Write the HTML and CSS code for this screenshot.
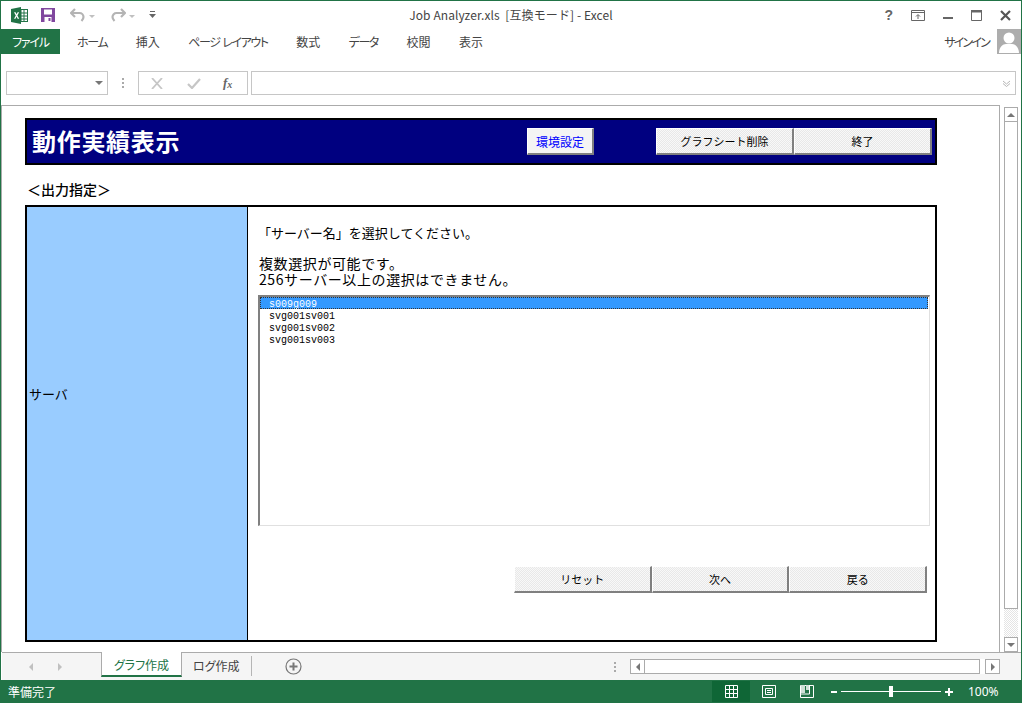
FILE: index.html
```html
<!DOCTYPE html>
<html lang="ja">
<head>
    <meta charset="UTF-8">
    <title>Job Analyzer.xls [互換モード] - Excel</title>
    <link rel="stylesheet" href="styles.css">
</head>
<body>
    <div class="window">
        <!-- タイトルバー -->
        <div class="titlebar">
            <div class="quick">
                <svg class="ico-excel" width="17" height="17" viewBox="0 0 17 17">
                    <rect x="7" y="2.5" width="9.5" height="12" fill="#fff" stroke="#217346"/>
                    <path d="M10 3v11M13 3v11M7 6h9M7 9h9M7 12h9" stroke="#217346" fill="none"/>
                    <path d="M0 2l10-2v17l-10-2z" fill="#217346"/>
                    <path d="M3 5.2h1.6l1 2 1-2h1.5l-1.700 3.200 1.800 3.400h-1.600l-1-2.200-1.100 2.200h-1.500l1.800-3.400z" fill="#fff"/>
                </svg>
                <svg class="ico-save" width="14" height="14" viewBox="0 0 14 14">
                    <path d="M0 0h14v14h-14z" fill="#80479e"/>
                    <rect x="3" y="1.500" width="8" height="5" fill="#fff"/>
                    <rect x="3.500" y="9" width="7" height="5" fill="#fff"/>
                    <rect x="7.500" y="10" width="2" height="3" fill="#80479e"/>
                </svg>
                <svg class="ico-undo" width="16" height="14" viewBox="0 0 16 14">
                    <path d="M5 1l-4 4 4 4M1.500 5h8a4 4 0 0 1 4 4c0 1.500-1 3-2 4" fill="none" stroke="#b4b4b4" stroke-width="2.200"/>
                </svg>
                <span class="mini-arrow"></span>
                <svg class="ico-redo" width="16" height="14" viewBox="0 0 16 14">
                    <path d="M11 1l4 4-4 4M14.500 5h-8a4 4 0 0 0-4 4c0 1.500 1 3 2 4" fill="none" stroke="#b4b4b4" stroke-width="2.200"/>
                </svg>
                <span class="mini-arrow"></span>
                <svg class="ico-custom" width="7" height="8" viewBox="0 0 7 8">
                    <path d="M1 0h5v1h-5zM0 3h7l-3.500 4z" fill="#666"/>
                </svg>
            </div>
            <div class="title">Job Analyzer.xls&nbsp; [互換モード] - Excel</div>
            <div class="winctrl">
                <span class="help">?</span>
                <svg width="14" height="11" viewBox="0 0 14 11">
                    <path d="M.5.500h13v10h-13z" fill="none" stroke="#666"/>
                    <path d="M1 2.500h12" stroke="#666"/>
                    <path d="M7 9v-4M5 6.500l2-2 2 2" fill="none" stroke="#666"/>
                </svg>
                <svg width="10" height="11" viewBox="0 0 10 11"><path d="M0 7h10v2h-10z" fill="#666"/></svg>
                <svg width="11" height="11" viewBox="0 0 11 11">
                    <path d="M.5.500h10v10h-10z" fill="none" stroke="#666"/><path d="M0 0h11v2.500h-11z" fill="#666"/>
                </svg>
                <svg width="11" height="11" viewBox="0 0 11 11">
                    <path d="M1 1l9 9M10 1l-9 9" stroke="#555" stroke-width="2.200"/>
                </svg>
            </div>
        </div>

        <!-- リボンタブ -->
        <div class="ribbon">
            <div class="file-tab">ファイル</div>
            <ul class="tabs">
                <li class="kana">ホーム</li>
                <li>挿入</li>
                <li class="kana">ページ レイアウト</li>
                <li>数式</li>
                <li class="kana">データ</li>
                <li>校閲</li>
                <li>表示</li>
            </ul>
            <div class="signin">サインイン</div>
            <div class="avatar">
                <svg width="24" height="24" viewBox="0 0 24 24">
                    <circle cx="12" cy="9" r="5.500" fill="#fff"/>
                    <path d="M2 24c0-6 4-9 7-9h6c3 0 7 3 7 9z" fill="#fff"/>
                </svg>
            </div>
        </div>

        <!-- 数式バー -->
        <div class="formula">
            <div class="namebox"><span class="drop"></span></div>
            <div class="grip"><i></i><i></i><i></i></div>
            <div class="fx-btns">
                <svg width="12" height="11" viewBox="0 0 12 11"><path d="M1 0l10 11M11 0l-10 11" stroke="#c6c6c6" stroke-width="1.800"/></svg>
                <svg width="14" height="11" viewBox="0 0 14 11"><path d="M1 6l4 4 8-9" fill="none" stroke="#c6c6c6" stroke-width="2.200"/></svg>
                <span class="fx">f<sub>x</sub></span>
            </div>
            <div class="fx-input">
                <svg width="9" height="7" viewBox="0 0 9 7"><path d="M1 1l3.500 3 3.500-3M1 3.500l3.500 3 3.500-3" fill="none" stroke="#b5b5b5"/></svg>
            </div>
        </div>

        <!-- シート -->
        <div class="sheet-row">
            <div class="sheet">
                <div class="banner">
                    <h1>動作実績表示</h1>
                    <button class="btn btn-config">環境設定</button>
                    <div class="banner-right">
                        <button class="btn btn-wide">グラフシート削除</button>
                        <button class="btn btn-wide">終了</button>
                    </div>
                </div>
                <div class="section-label">＜出力指定＞</div>
                <div class="panel">
                    <div class="panel-side">サーバ</div>
                    <div class="panel-main">
                        <p class="lead">「サーバー名」を選択してください。</p>
                        <p class="note">複数選択が可能です。<br>256サーバー以上の選択はできません。</p>
                        <ul class="listbox">
                            <li class="selected">s009g009</li>
                            <li>svg001sv001</li>
                            <li>svg001sv002</li>
                            <li>svg001sv003</li>
                        </ul>
                        <div class="actions">
                            <button class="btn btn-wide">リセット</button>
                            <button class="btn btn-wide">次へ</button>
                            <button class="btn btn-wide">戻る</button>
                        </div>
                    </div>
                </div>
            </div>
            <div class="vscroll">
                <div class="sb-btn"><span class="tri tri-up"></span></div>
                <div class="sb-thumb"></div>
                <div class="sb-track"></div>
                <div class="sb-btn"><span class="tri tri-down"></span></div>
            </div>
        </div>

        <!-- シートタブ -->
        <div class="sheetbar">
            <div class="nav">
                <span class="tri tri-left light"></span>
                <span class="tri tri-right light"></span>
            </div>
            <div class="stab active">グラフ作成</div>
            <div class="stab">ログ作成</div>
            <svg class="add" width="17" height="17" viewBox="0 0 17 17">
                <circle cx="8.500" cy="8.500" r="7.500" fill="none" stroke="#777" stroke-width="1.200"/>
                <path d="M8.500 4.500v8M4.500 8.500h8" stroke="#777" stroke-width="2"/>
            </svg>
            <div class="grip grip-sheet"><i></i><i></i><i></i></div>
            <div class="hscroll">
                <div class="sb-btn sb-h"><span class="tri tri-left"></span></div>
                <div class="hs-thumb"></div>
                <div class="sb-btn sb-h"><span class="tri tri-right"></span></div>
            </div>
        </div>

        <!-- ステータスバー -->
        <div class="status">
            <div class="ready">準備完了</div>
            <div class="view active-view">
                <svg width="13" height="13" viewBox="0 0 13 13"><path d="M.5.500h12v12h-12zM4.500 0v13M8.500 0v13M0 4.500h13M0 8.500h13" fill="none" stroke="#fff"/></svg>
            </div>
            <div class="view">
                <svg width="14" height="13" viewBox="0 0 14 13"><path d="M.5.500h13v12h-13zM3.500 3.500h7v6h-7zM5 5.500h4M5 7.500h4" fill="none" stroke="#fff"/></svg>
            </div>
            <div class="view">
                <svg width="14" height="13" viewBox="0 0 14 13"><path d="M.5.500h13v12h-13z" fill="none" stroke="#fff"/><path d="M1 0h4v8h-4zM6 0h3v5h-3z" fill="#cfe0d6"/><path d="M9.500 1v8H1" fill="none" stroke="#fff"/></svg>
            </div>
            <div class="zoom">
                <span class="z-minus"></span>
                <div class="z-line"><span class="z-thumb"></span></div>
                <span class="z-plus"></span>
            </div>
            <div class="percent">100%</div>
        </div>
    </div>
</body>
</html>
```

FILE: styles.css
```css
* {
    box-sizing: border-box;
    margin: 0;
    padding: 0;
}

html, body {
    height: 100%;
    overflow: hidden;
}

body {
    font-family: "Noto Sans CJK JP", "Noto Sans", sans-serif;
    font-size: 12px;
    color: #444;
    background: #fff;
}

svg {
    display: block;
    flex: none;
}

.window {
    width: 1022px;
    height: 703px;
    border: 1px solid #217346;
    border-bottom: none;
    display: flex;
    flex-direction: column;
}

/* title bar */
.titlebar {
    height: 28px;
    display: grid;
    grid-template-columns: 1fr auto 1fr;
    align-items: center;
}

.quick {
    display: flex;
    align-items: center;
    padding-left: 10px;
}

.ico-save { margin-left: 13px; }
.ico-undo { margin-left: 15px; }
.ico-redo { margin-left: 15px; }
.ico-custom { margin-left: 14px; }

.mini-arrow {
    width: 0;
    height: 0;
    margin-left: 3px;
    margin-top: 2px;
    border: 3px solid transparent;
    border-top: 3px solid #c0c0c0;
    border-bottom: none;
}

.title {
    font-size: 12px;
    color: #444;
    line-height: 28px;
    letter-spacing: 0.1px;
}

.winctrl {
    display: flex;
    align-items: center;
    justify-content: flex-end;
    gap: 18px;
    padding-right: 10px;
}

.help {
    font: bold 14px "Liberation Sans", sans-serif;
    color: #666;
}

/* ribbon */
.ribbon {
    height: 25px;
    display: flex;
    align-items: stretch;
}

.file-tab {
    width: 59px;
    background: #217346;
    color: #fff;
    text-align: center;
    line-height: 25px;
    font-feature-settings: "palt";
    letter-spacing: -1.2px;
}

.tabs {
    display: flex;
    list-style: none;
    gap: 28.500px;
    padding-left: 17px;
    line-height: 25px;
    font-feature-settings: "palt";
    flex: 1;
}

.tabs .kana {
    letter-spacing: -1.400px;
    word-spacing: 1.500px;
}

.signin {
    line-height: 25px;
    font-feature-settings: "palt";
    letter-spacing: -1.800px;
    padding-right: 8px;
}

.avatar {
    width: 24px;
    background: #adadad;
    overflow: hidden;
}

/* formula bar */
.formula {
    height: 51px;
    padding: 17px 5px 10px 5px;
    display: flex;
    align-items: stretch;
}

.namebox {
    width: 102px;
    border: 1px solid #c6c6c6;
    display: flex;
    align-items: center;
    justify-content: flex-end;
    padding-right: 4px;
}

.drop {
    border: 4px solid transparent;
    border-top: 4px solid #777;
    border-bottom: none;
    border-left-width: 4px;
}

.grip {
    width: 30px;
    display: flex;
    flex-direction: column;
    align-items: center;
    justify-content: center;
    gap: 2px;
}

.grip i {
    display: block;
    width: 2px;
    height: 2px;
    background: #aaa;
}

.fx-btns {
    width: 110px;
    border: 1px solid #c6c6c6;
    display: flex;
    align-items: center;
    padding-left: 12px;
    gap: 24px;
}

.fx {
    font: italic bold 13px "Liberation Serif", serif;
    color: #666;
    margin-left: -2px;
}

.fx sub {
    font-size: 10px;
    vertical-align: -1px;
}

.fx-input {
    flex: 1;
    margin-left: 3px;
    border: 1px solid #c6c6c6;
    display: flex;
    align-items: center;
    justify-content: flex-end;
    padding-right: 4px;
}

/* sheet */
.sheet-row {
    height: 547px;
    display: flex;
}

.sheet {
    width: 999px;
    border-top: 1px solid #ababab;
    border-left: 1px solid #ababab;
    border-right: 1px solid #ababab;
    padding: 12px 0 0 23px;
    font-family: "Liberation Sans", "Noto Sans CJK JP", sans-serif;
    color: #000;
}

.banner {
    width: 912px;
    height: 47px;
    background: #000080;
    border: 2px solid #000;
    display: flex;
    align-items: center;
    padding-left: 5px;
}

.banner h1 {
    width: 495px;
    padding-top: 3px;
    color: #fff;
    font-size: 24px;
    font-weight: 700;
    line-height: 1;
    letter-spacing: 0.700px;
}

.btn {
    font-family: "Noto Sans CJK JP", sans-serif;
    font-size: 11px;
    color: #000;
    height: 27px;
    border: none;
    border-top: 1px solid #fff;
    border-left: 1px solid #fff;
    border-right: 2px solid #808080;
    border-bottom: 2px solid #808080;
    background: repeating-conic-gradient(#e8e8e8 0 25%, #f8f8f8 0 50%) 0 0 / 2px 2px;
}

.btn-config {
    width: 67px;
    font-size: 12px;
    color: #0000ff;
    background: #f4f4f4;
}

.btn-wide {
    width: 138px;
}

.banner-right {
    display: flex;
    margin-left: 62px;
}

.section-label {
    height: 40px;
    padding: 14px 0 0 2px;
    font-family: "Noto Sans CJK JP", sans-serif;
    font-size: 14px;
    font-weight: 500;
    line-height: 20px;
}

.panel {
    width: 912px;
    height: 437px;
    border: 2px solid #000;
    display: flex;
}

.panel-side {
    width: 221px;
    background: #99ccff;
    border-right: 1px solid #000;
    display: flex;
    align-items: center;
    padding: 0 0 61px 2px;
    font-family: "Noto Sans CJK JP", sans-serif;
    font-size: 13px;
    line-height: 1;
}

.panel-main {
    flex: 1;
    padding: 18px 5px 0 10px;
    font-family: "Noto Sans CJK JP", sans-serif;
    font-size: 13px;
    line-height: 16px;
}

.note {
    margin-top: 14px;
    padding-left: 1px;
    font-size: 14px;
    letter-spacing: 0.600px;
}

.listbox {
    list-style: none;
    height: 231px;
    margin-top: 8px;
    border-top: 2px solid #808080;
    border-left: 2px solid #808080;
    border-right: 1px solid #e0e0e0;
    border-bottom: 1px solid #e0e0e0;
    font-family: "Liberation Mono", monospace;
    font-size: 10px;
    line-height: 15px;
}

.listbox li {
    padding-left: 9px;
    height: 12px;
}

.listbox .selected {
    background: #3399ff;
    color: #fff;
    outline: 1px dotted #333;
    outline-offset: -1px;
    margin-right: 1px;
}

.actions {
    display: flex;
    justify-content: flex-end;
    margin-top: 40px;
    padding-right: 3px;
}

.actions .btn-wide {
    width: 137.670px;
}

/* scroll bars */
.vscroll {
    width: 21px;
    padding: 2px 3px 0 4px;
    display: flex;
    flex-direction: column;
}

.sb-btn {
    height: 15px;
    border: 1px solid #ababab;
    background: #fff;
    display: flex;
    align-items: center;
    justify-content: center;
    flex: none;
}

.sb-thumb {
    height: 487px;
    border: 1px solid #ababab;
    border-top: none;
    background: #fff;
}

.sb-track {
    height: 28px;
    background: repeating-conic-gradient(#e4e4e4 0 25%, #fff 0 50%) 0 0 / 2px 2px;
}

.tri {
    display: block;
    width: 0;
    height: 0;
    border: 4px solid transparent;
}

.tri-up { border-bottom: 4px solid #777; border-top: none; }
.tri-down { border-top: 4px solid #777; border-bottom: none; }
.tri-left { border-right: 4px solid #777; border-left: none; }
.tri-right { border-left: 4px solid #777; border-right: none; }
.tri-left.light { border-right-color: #c0c0c0; }
.tri-right.light { border-left-color: #c0c0c0; }

/* sheet tabs */
.sheetbar {
    height: 28px;
    background: #f5f5f5;
    border-top: 1px solid #ababab;
    display: flex;
    align-items: flex-start;
    margin-left: 1px;
}

.nav {
    width: 99px;
    height: 27px;
    display: flex;
    align-items: center;
    gap: 25px;
    padding-left: 27px;
}

.stab {
    height: 23px;
    line-height: 25px;
    padding: 0 12px;
    color: #444;
    font-feature-settings: "palt";
    position: relative;
}

.stab.active {
    width: 81px;
    height: 25px;
    margin-top: -1px;
    padding: 0;
    text-align: center;
    background: #fff;
    color: #217346;
    border: 1px solid #ababab;
    border-top: none;
    border-bottom: 2px solid #217346;
}

.stab:not(.active) {
    width: 70px;
    margin-top: 3px;
    line-height: 19px;
    height: 20px;
    border-right: 1px solid #b5b5b5;
    padding: 0 0 0 11px;
}

.add {
    margin: 5px 0 0 33px;
}

.grip-sheet {
    width: 10px;
    height: 27px;
    margin-left: 308px;
}

.hscroll {
    margin: 6px 0 0 10px;
    width: 370px;
    display: flex;
    background: #fff;
}

.sb-h {
    width: 15px;
}

.hs-thumb {
    width: 335px;
    height: 15px;
    border: 1px solid #ababab;
    border-left: none;
    background: #fff;
    margin-right: 5px;
}

/* status bar */
.status {
    height: 23px;
    margin: 0 -1px;
    background: #217346;
    color: #fff;
    display: flex;
    align-items: center;
}

.ready {
    width: 712px;
    padding-left: 8px;
}

.view {
    width: 38px;
    height: 21px;
    display: flex;
    align-items: center;
    justify-content: center;
}

.active-view {
    background: #0f6636;
}

.zoom {
    display: flex;
    align-items: center;
    margin-left: 5px;
    gap: 4px;
}

.z-minus {
    width: 6px;
    height: 2px;
    background: #fff;
}

.z-line {
    width: 100px;
    height: 1px;
    background: #fff;
    display: flex;
    justify-content: center;
    align-items: center;
}

.z-thumb {
    width: 4px;
    height: 11px;
    background: #fff;
}

.z-plus {
    width: 8px;
    height: 8px;
    background:
        linear-gradient(#fff, #fff) center / 8px 2px no-repeat,
        linear-gradient(#fff, #fff) center / 2px 8px no-repeat;
}

.percent {
    margin-left: 15px;
    font-family: "Noto Sans", sans-serif;
}
```
